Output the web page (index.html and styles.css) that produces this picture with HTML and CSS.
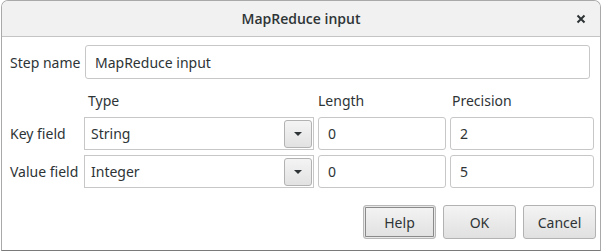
FILE: index.html
```html
<!DOCTYPE html>
<html lang="en">
<head>
    <meta charset="UTF-8">
    <title>MapReduce input</title>
    <link rel="stylesheet" href="styles.css">
</head>
<body>
    <div class="window">
        <div class="titlebar">
            <span class="title">MapReduce input</span>
            <span class="close">
                <svg width="10" height="10" viewBox="0 0 10 10">
                    <path d="M1.5 1.5 L8.5 8.5 M8.5 1.5 L1.5 8.5" stroke="#2e3436" stroke-width="2"/>
                </svg>
            </span>
        </div>
        <div class="content">
            <div class="row step">
                <label class="label">Step name</label>
                <div class="entry wide">MapReduce input</div>
            </div>
            <div class="row head">
                <span class="label"></span>
                <span class="col-type">Type</span>
                <span class="col-len">Length</span>
                <span class="col-prec">Precision</span>
            </div>
            <div class="row field">
                <label class="label">Key field</label>
                <div class="combo col-type">
                    <span>String</span>
                    <span class="drop"><span class="arrow"></span></span>
                </div>
                <div class="entry col-len">0</div>
                <div class="entry col-prec">2</div>
            </div>
            <div class="row field">
                <label class="label">Value field</label>
                <div class="combo col-type">
                    <span>Integer</span>
                    <span class="drop"><span class="arrow"></span></span>
                </div>
                <div class="entry col-len">0</div>
                <div class="entry col-prec">5</div>
            </div>
            <div class="buttons">
                <button class="btn focus">Help</button>
                <button class="btn">OK</button>
                <button class="btn">Cancel</button>
            </div>
        </div>
    </div>
</body>
</html>
```

FILE: styles.css
```css
body {
    margin: 0;
    padding: 0;
    background: #ffffff;
    font-family: "Noto Sans", "Open Sans", sans-serif;
    font-size: 14px;
    color: #2e3436;
}
.window {
    box-sizing: border-box;
    margin-left: 1px;
    width: 600px;
    height: 251px;
    border: 1px solid #a9a9a9;
    border-bottom-color: #7a7a7a;
    border-radius: 7px 7px 0 0;
    background: #ffffff;
    overflow: hidden;
}
.titlebar {
    position: relative;
    height: 35px;
    background: #f1f1f1;
    border-bottom: 1px solid #c4c4c4;
    display: flex;
    align-items: center;
    justify-content: center;
}
.title {
    font-family: "Open Sans", "Noto Sans", sans-serif;
    font-weight: 600;
    font-size: 14px;
    color: #2e3436;
}
.close {
    position: absolute;
    right: 14px;
    top: 13px;
    display: flex;
}
.content {
    padding-top: 8px;
}
.row {
    display: flex;
    align-items: center;
}
.label {
    box-sizing: border-box;
    width: 82px;
    padding-left: 8px;
    flex: none;
}
.step {
    height: 34px;
}
.entry {
    box-sizing: border-box;
    height: 100%;
    border: 1px solid #c7c7c7;
    border-radius: 3px;
    background: #fff;
    display: flex;
    align-items: center;
    padding-left: 9px;
}
.wide {
    margin-left: 1px;
    width: 505px;
}
.head {
    height: 38px;
    padding-top: 4px;
    box-sizing: border-box;
}
.head span {
    box-sizing: border-box;
}
.head .col-type {
    padding-left: 4px;
}
.head .col-prec {
    padding-left: 2px;
}
.col-type {
    width: 230px;
    flex: none;
}
.col-len {
    width: 128px;
    margin-left: 4px;
    flex: none;
}
.col-prec {
    width: 144px;
    margin-left: 4px;
    flex: none;
}
.field {
    height: 33px;
    margin-bottom: 5px;
}
.combo {
    box-sizing: border-box;
    height: 100%;
    border: 1px solid #c7c7c7;
    background: #fff;
    display: flex;
    align-items: center;
    justify-content: space-between;
    padding: 0 1px 0 6px;
}
.drop {
    box-sizing: border-box;
    width: 28px;
    height: 28px;
    border: 1px solid #b2b2b2;
    border-radius: 3px;
    background: linear-gradient(#f4f4f4, #e2e2e2);
    display: flex;
    align-items: center;
    justify-content: center;
}
.arrow {
    width: 0;
    height: 0;
    border-left: 4px solid transparent;
    border-right: 4px solid transparent;
    border-top: 4px solid #2e3436;
}
.buttons {
    display: flex;
    justify-content: flex-end;
    gap: 7px;
    margin-top: 17px;
    padding-right: 4px;
}
.btn {
    box-sizing: border-box;
    width: 73px;
    height: 34px;
    font-family: "Noto Sans", "Open Sans", sans-serif;
    font-size: 14px;
    color: #2e3436;
    border: 1px solid #b2b2b2;
    border-radius: 3px;
    background: linear-gradient(#f4f4f4, #e0e0e0);
    padding: 0;
}
.btn.focus {
    box-shadow: inset 0 0 0 1px #e8e8e8, inset 0 0 0 2px #8a8a8a;
    border-color: #b8b8b8;
}
```
